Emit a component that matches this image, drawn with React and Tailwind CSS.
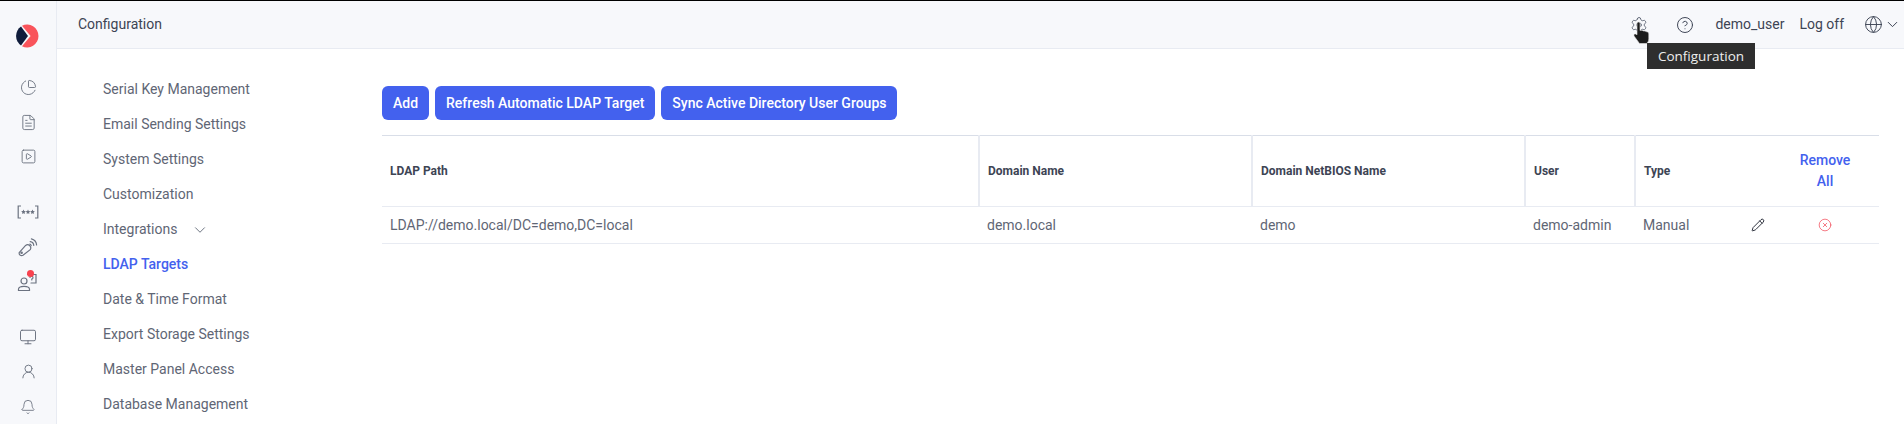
import { Bell, ChevronDown, CircleHelp, CircleX, FileText, Globe, Monitor, Pencil, Settings, SquarePlay, UserRound, ChartPie } from 'lucide-react'

const menuItems = [
  'Serial Key Management',
  'Email Sending Settings',
  'System Settings',
  'Customization',
  'Integrations',
  'LDAP Targets',
  'Date & Time Format',
  'Export Storage Settings',
  'Master Panel Access',
  'Database Management',
]

function Logo() {
  return (
    <svg width="24" height="24" viewBox="0 0 24 24">
      <path d="M6 1.8A11.4 11.4 0 1 1 6 22.2L14.6 12Z" fill="#f9545b" />
      <path d="M5 2.6A11.4 11.4 0 0 0 5 21.4L12 12Z" fill="#101d3c" />
    </svg>
  )
}

function KeysIcon() {
  return (
    <svg width="22" height="14" viewBox="0 0 22 14" fill="none" stroke="#6b7280" strokeWidth="1.2">
      <path d="M4 1H1.2v12H4M18 1h2.8v12H18" />
      <g fill="#6b7280" stroke="none">
        <path d="M6.5 4.5l.7 1.6 1.6.2-1.2 1.1.3 1.6-1.4-.8-1.4.8.3-1.6-1.2-1.1 1.6-.2Z" />
        <path d="M11 4.5l.7 1.6 1.6.2-1.2 1.1.3 1.6-1.4-.8-1.4.8.3-1.6-1.2-1.1 1.6-.2Z" />
        <path d="M15.5 4.5l.7 1.6 1.6.2-1.2 1.1.3 1.6-1.4-.8-1.4.8.3-1.6-1.2-1.1 1.6-.2Z" />
      </g>
    </svg>
  )
}

function KeySignalIcon() {
  return (
    <svg width="20" height="20" viewBox="0 0 20 20" fill="none" stroke="#6b7280" strokeWidth="1.2" strokeLinecap="round">
      <path d="M1.2 15.6 7.6 8.4a3.2 3.2 0 0 1 4.6 4.3L5 18.3c-1 .6-2 .5-3-.3-.7-.7-1-1.5-.8-2.4Z" />
      <circle cx="3.6" cy="15.8" r=".7" />
      <path d="M12.2 4.6a4.2 4.2 0 0 1 3.6 3.8M13.4 1.8a7 7 0 0 1 5.2 6.2M11.8 7.2a2 2 0 0 1 1.4 1.4" />
    </svg>
  )
}

function SupportIcon() {
  return (
    <svg width="22" height="20" viewBox="0 0 22 20" fill="none" stroke="#6b7280" strokeWidth="1.2" strokeLinecap="round">
      <circle cx="7" cy="9" r="3" />
      <path d="M1.5 18.5v-1.2c0-2 1.8-3 5.5-3s5.500 1 5.500 3v1.200Z" />
      <path d="M10.500 2.500h8.500v8.500h-5" />
      <path d="M13 5.500a1.500 1.500 0 1 1 1.800 1.500v1" />
    </svg>
  )
}

function HandCursor() {
  return (
    <svg className="absolute left-[1632px] top-[20px]" width="20" height="24" viewBox="0 0 20 24">
      <path d="M5 2.500a1.500 1.500 0 0 1 3 0v7l1-.3 1.500.2 1 .5 1.500.1 1.200.6 1.300.300c.8.300 1.300 1 1.300 2v5c0 2-1 3.600-2.400 4.600H7.500L2.400 15.500c-.7-1-.6-1.900.1-2.400.6-.4 1.400-.3 2.500.7Z" fill="#1c1c1c" stroke="#e5e5e5" strokeWidth=".6" />
    </svg>
  )
}

function SideIcon({ children }) {
  return <div className="flex h-[35px] w-full items-center justify-center">{children}</div>
}

export default function App() {
  return (
    <div className="relative flex h-[424px] w-[1904px] overflow-hidden border-t border-black bg-white font-['Roboto',sans-serif] text-[14px] text-[#5f6675]">
      <aside className="flex w-[57px] shrink-0 flex-col items-center border-r border-[#e8ebf2] bg-[#f7f8fb]">
        <div className="mt-[23px] mb-[22px] h-[24px]">
          <Logo />
        </div>
        <SideIcon><ChartPie size={17} strokeWidth={1.3} color="#6b7280" /></SideIcon>
        <SideIcon><FileText size={17} strokeWidth={1.3} color="#6b7280" /></SideIcon>
        <SideIcon><SquarePlay size={17} strokeWidth={1.3} color="#6b7280" /></SideIcon>
        <div className="mt-[20px] w-full">
          <SideIcon><KeysIcon /></SideIcon>
          <SideIcon><KeySignalIcon /></SideIcon>
          <div className="relative">
            <SideIcon><SupportIcon /></SideIcon>
            <span className="absolute left-[27px] top-[6px] h-[7px] w-[7px] rounded-full bg-[#f9434f]" />
          </div>
        </div>
        <div className="mt-[20px] w-full">
          <SideIcon><Monitor size={18} strokeWidth={1.3} color="#6b7280" /></SideIcon>
          <SideIcon><UserRound size={17} strokeWidth={1.3} color="#6b7280" /></SideIcon>
          <SideIcon><Bell size={16} strokeWidth={1.3} color="#6b7280" /></SideIcon>
        </div>
      </aside>

      <div className="min-w-0 flex-1">
        <header className="flex h-[48px] items-center border-b border-[#e8ebf2] bg-[#f7f8fb] pl-[21px] pr-[3px] text-[#3d4454]">
          <span>Configuration</span>
          <div className="ml-auto flex items-center">
            <Settings size={18} strokeWidth={1.3} color="#5f6675" />
            <CircleHelp size={18} strokeWidth={1.3} color="#3d4454" className="ml-[28px]" />
            <span className="ml-[21px]">demo_user</span>
            <span className="ml-[15px]">Log off</span>
            <Globe size={19} strokeWidth={1.2} color="#3d4454" className="ml-[20px]" />
            <ChevronDown size={17} strokeWidth={1.4} color="#3d4454" className="ml-[1px]" />
          </div>
        </header>

        <div className="flex">
          <ul className="w-[325px] shrink-0 pl-[46px] pt-[23px]">
            {menuItems.map((item) => (
              <li key={item} className={`flex h-[35px] items-center ${item === 'LDAP Targets' ? 'font-medium text-[#4361ee]' : ''}`}>
                {item}
                {item === 'Integrations' && <ChevronDown size={18} strokeWidth={1.2} className="ml-[14px]" />}
              </li>
            ))}
          </ul>

          <main className="w-[1497px] pt-[37px]">
            <div className="flex gap-[6px]">
              <button className="h-[34px] rounded-[6px] bg-[#4361ee] px-[11px] font-medium text-white">Add</button>
              <button className="h-[34px] rounded-[6px] bg-[#4361ee] px-[11px] font-medium text-white">Refresh Automatic LDAP Target</button>
              <button className="h-[34px] rounded-[6px] bg-[#4361ee] px-[11px] font-medium text-white">Sync Active Directory User Groups</button>
            </div>

            <table className="mt-[15px] w-full table-fixed border-collapse border-t border-[#d9dee8]">
              <colgroup>
                <col className="w-[597px]" />
                <col className="w-[273px]" />
                <col className="w-[273px]" />
                <col className="w-[110px]" />
                <col className="w-[110px]" />
                <col className="w-[26px]" />
                <col className="w-[108px]" />
              </colgroup>
              <thead>
                <tr className="h-[71px] border-b border-[#e8ebf2] text-left text-[12px] font-bold text-[#3d4454]">
                  <th className="border-r-2 border-[#e8ebf2] px-[8px]">LDAP Path</th>
                  <th className="border-r-2 border-[#e8ebf2] px-[8px]">Domain Name</th>
                  <th className="border-r-2 border-[#e8ebf2] px-[8px]">Domain NetBIOS Name</th>
                  <th className="border-r-2 border-[#e8ebf2] px-[8px]">User</th>
                  <th className="px-[8px]">Type</th>
                  <th />
                  <th className="text-center text-[14px] font-medium leading-[21px] text-[#4361ee]">Remove<br />All</th>
                </tr>
              </thead>
              <tbody>
                <tr className="h-[37px] border-b border-[#e8ebf2]">
                  <td className="px-[8px]">LDAP://demo.local/DC=demo,DC=local</td>
                  <td className="px-[8px]">demo.local</td>
                  <td className="px-[8px]">demo</td>
                  <td className="px-[8px]">demo-admin</td>
                  <td className="px-[8px]">Manual</td>
                  <td><Pencil size={14} strokeWidth={1.6} color="#1f2430" className="mx-auto" /></td>
                  <td><CircleX size={14} strokeWidth={1.2} color="#f04452" className="mx-auto" /></td>
                </tr>
              </tbody>
            </table>
          </main>
        </div>
      </div>

      <HandCursor />
      <div className="absolute left-[1647px] top-[42px] flex h-[26px] w-[108px] items-center justify-center bg-[#2e2e2e] font-['Open_Sans',sans-serif] text-[13.5px] text-[#eeeeee]">
        Configuration
      </div>
    </div>
  )
}
